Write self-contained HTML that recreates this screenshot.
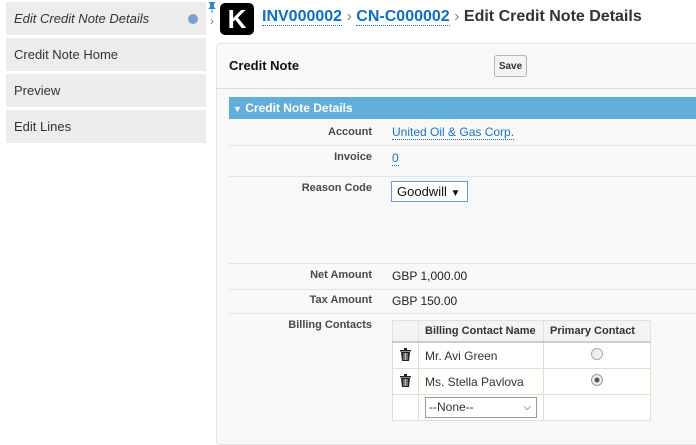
<!DOCTYPE html>
<html><head><style>
body{margin:0;width:696px;height:434px;overflow:hidden;background:#fff;font-family:"Liberation Sans",Arial,sans-serif;position:relative}
.a{position:absolute}
.nav{left:6px;width:200px;height:33px;background:#ececec;font-size:13px;color:#333;line-height:33px;padding-left:8px;box-sizing:border-box}
.lbl{right:324px;font-size:11px;font-weight:bold;color:#4a4a4a;text-align:right}
.val{left:392px;font-size:12px;color:#222}
.lnk{color:#1a73c6;border-bottom:1px dotted #1a73c6}
.sep{left:229px;width:467px;height:1px;background:#e3e3e3}
table{border-collapse:collapse;font-size:12px;table-layout:fixed}
td,th{border:1px solid #e4e0c8;padding:0 6px;height:25px;color:#333;background:#fff;overflow:hidden;white-space:nowrap}
th{background:#f2f3f3;font-size:11px;text-align:left;height:20px;border:1px solid #e0e0e0;border-bottom:2px solid #ccc}
</style></head><body>
<div class="a nav" style="top:2px;font-style:italic">Edit Credit Note Details<span class="a" style="left:182px;top:12px;width:10px;height:10px;border-radius:50%;background:#7a9fd0"></span></div>
<div class="a nav" style="top:38px">Credit Note Home</div>
<div class="a nav" style="top:74px">Preview</div>
<div class="a nav" style="top:110px">Edit Lines</div>
<svg class="a" style="left:207px;top:1px" width="10" height="12" viewBox="0 0 10 12"><path d="M2 1h6v1l-1 1v3l2 2H1l2-2V3L2 2z M4.5 8h1v4h-1z" fill="#2a88d8"/></svg>
<div class="a" style="left:210px;top:14px;color:#3a8fd8;font-size:12px">›</div>
<div class="a" style="left:220px;top:3px;width:34px;height:32px;background:#000;border-radius:5px;color:#fff;font-weight:900;font-size:26px;text-align:center;line-height:32px">K</div>
<div class="a" style="left:262px;top:8px;font-size:16px;font-weight:bold;color:#333;white-space:nowrap"><span class="lnk" style="color:#0b6fc7">INV000002</span> <span style="color:#888;font-weight:normal">›</span> <span class="lnk" style="color:#0b6fc7">CN-C000002</span> <span style="color:#888;font-weight:normal">›</span> Edit Credit Note Details</div>
<div class="a" style="left:216px;top:43px;width:490px;height:400px;background:#f8f8f8;border:1px solid #e4e4e4;border-radius:4px"></div>
<div class="a" style="left:229px;top:58px;font-size:13px;font-weight:bold;color:#111">Credit Note</div>
<div class="a" style="left:494px;top:55px;width:31px;height:20px;border:1px solid #b5b5b5;border-radius:3px;background:#f4f4f4;font-size:10px;font-weight:bold;text-align:center;line-height:22px;color:#333">Save</div>
<div class="a" style="left:216px;top:88px;width:480px;height:1px;background:#ddd"></div>
<div class="a" style="left:229px;top:97px;width:467px;height:22px;background:#62aedb;color:#fff;font-size:12px;font-weight:bold;line-height:22px;padding-left:4px"><span style="font-size:9px">▼</span> Credit Note Details</div>
<div class="a lbl" style="top:126px">Account</div><div class="a val" style="top:125px"><span class="lnk">United Oil &amp; Gas Corp.</span></div>
<div class="a sep" style="top:145px"></div>
<div class="a lbl" style="top:151px">Invoice</div><div class="a val" style="top:151px"><span class="lnk">0</span></div>
<div class="a sep" style="top:176px"></div>
<div class="a lbl" style="top:182px">Reason Code</div>
<div class="a" style="left:391px;top:181px;border:1px solid #6a9ad8;background:#fff;font-size:13px;line-height:19px;padding-left:5px;box-sizing:border-box;width:77px;height:21px;color:#111">Goodwill <span style="font-size:10px">▼</span></div>
<div class="a sep" style="top:263px"></div>
<div class="a lbl" style="top:269px">Net Amount</div><div class="a val" style="top:269px">GBP 1,000.00</div>
<div class="a sep" style="top:289px"></div>
<div class="a lbl" style="top:294px">Tax Amount</div><div class="a val" style="top:294px">GBP 150.00</div>
<div class="a sep" style="top:313px"></div>
<div class="a lbl" style="top:319px">Billing Contacts</div>
<table class="a" style="left:392px;top:320px;width:259px">
<colgroup><col style="width:26px"><col style="width:125px"><col></colgroup>
<tr><th></th><th>Billing Contact Name</th><th>Primary Contact</th></tr>
<tr><td style="text-align:center;padding:0"><svg width="11" height="13" viewBox="0 0 11 13"><path d="M0 2h11v1.5H0zM4 0h3v2H4zM1 4h9l-1 9H2z" fill="#222"/><path d="M4 5v7M5.5 5v7M7 5v7" stroke="#fff" stroke-width=".7"/></svg></td><td>Mr. Avi Green</td><td style="text-align:center"><span style="display:inline-block;width:10px;height:10px;border-radius:50%;border:1px solid #aaa;background:#eee"></span></td></tr>
<tr><td style="text-align:center;padding:0"><svg width="11" height="13" viewBox="0 0 11 13"><path d="M0 2h11v1.5H0zM4 0h3v2H4zM1 4h9l-1 9H2z" fill="#222"/><path d="M4 5v7M5.5 5v7M7 5v7" stroke="#fff" stroke-width=".7"/></svg></td><td>Ms. Stella Pavlova</td><td style="text-align:center"><span style="display:inline-block;width:10px;height:10px;border-radius:50%;border:1px solid #999;background:radial-gradient(#555 30%,#eee 40%)"></span></td></tr>
<tr><td></td><td style="padding-left:6px"><div style="font-size:12px;line-height:19px;padding-left:3px;box-sizing:border-box;width:112px;height:21px;border:1px solid #999;background:#fff">--None--<span style="float:right;margin-right:5px;font-size:10px">⌵</span></div></td><td></td></tr>
</table>
</body></html>
